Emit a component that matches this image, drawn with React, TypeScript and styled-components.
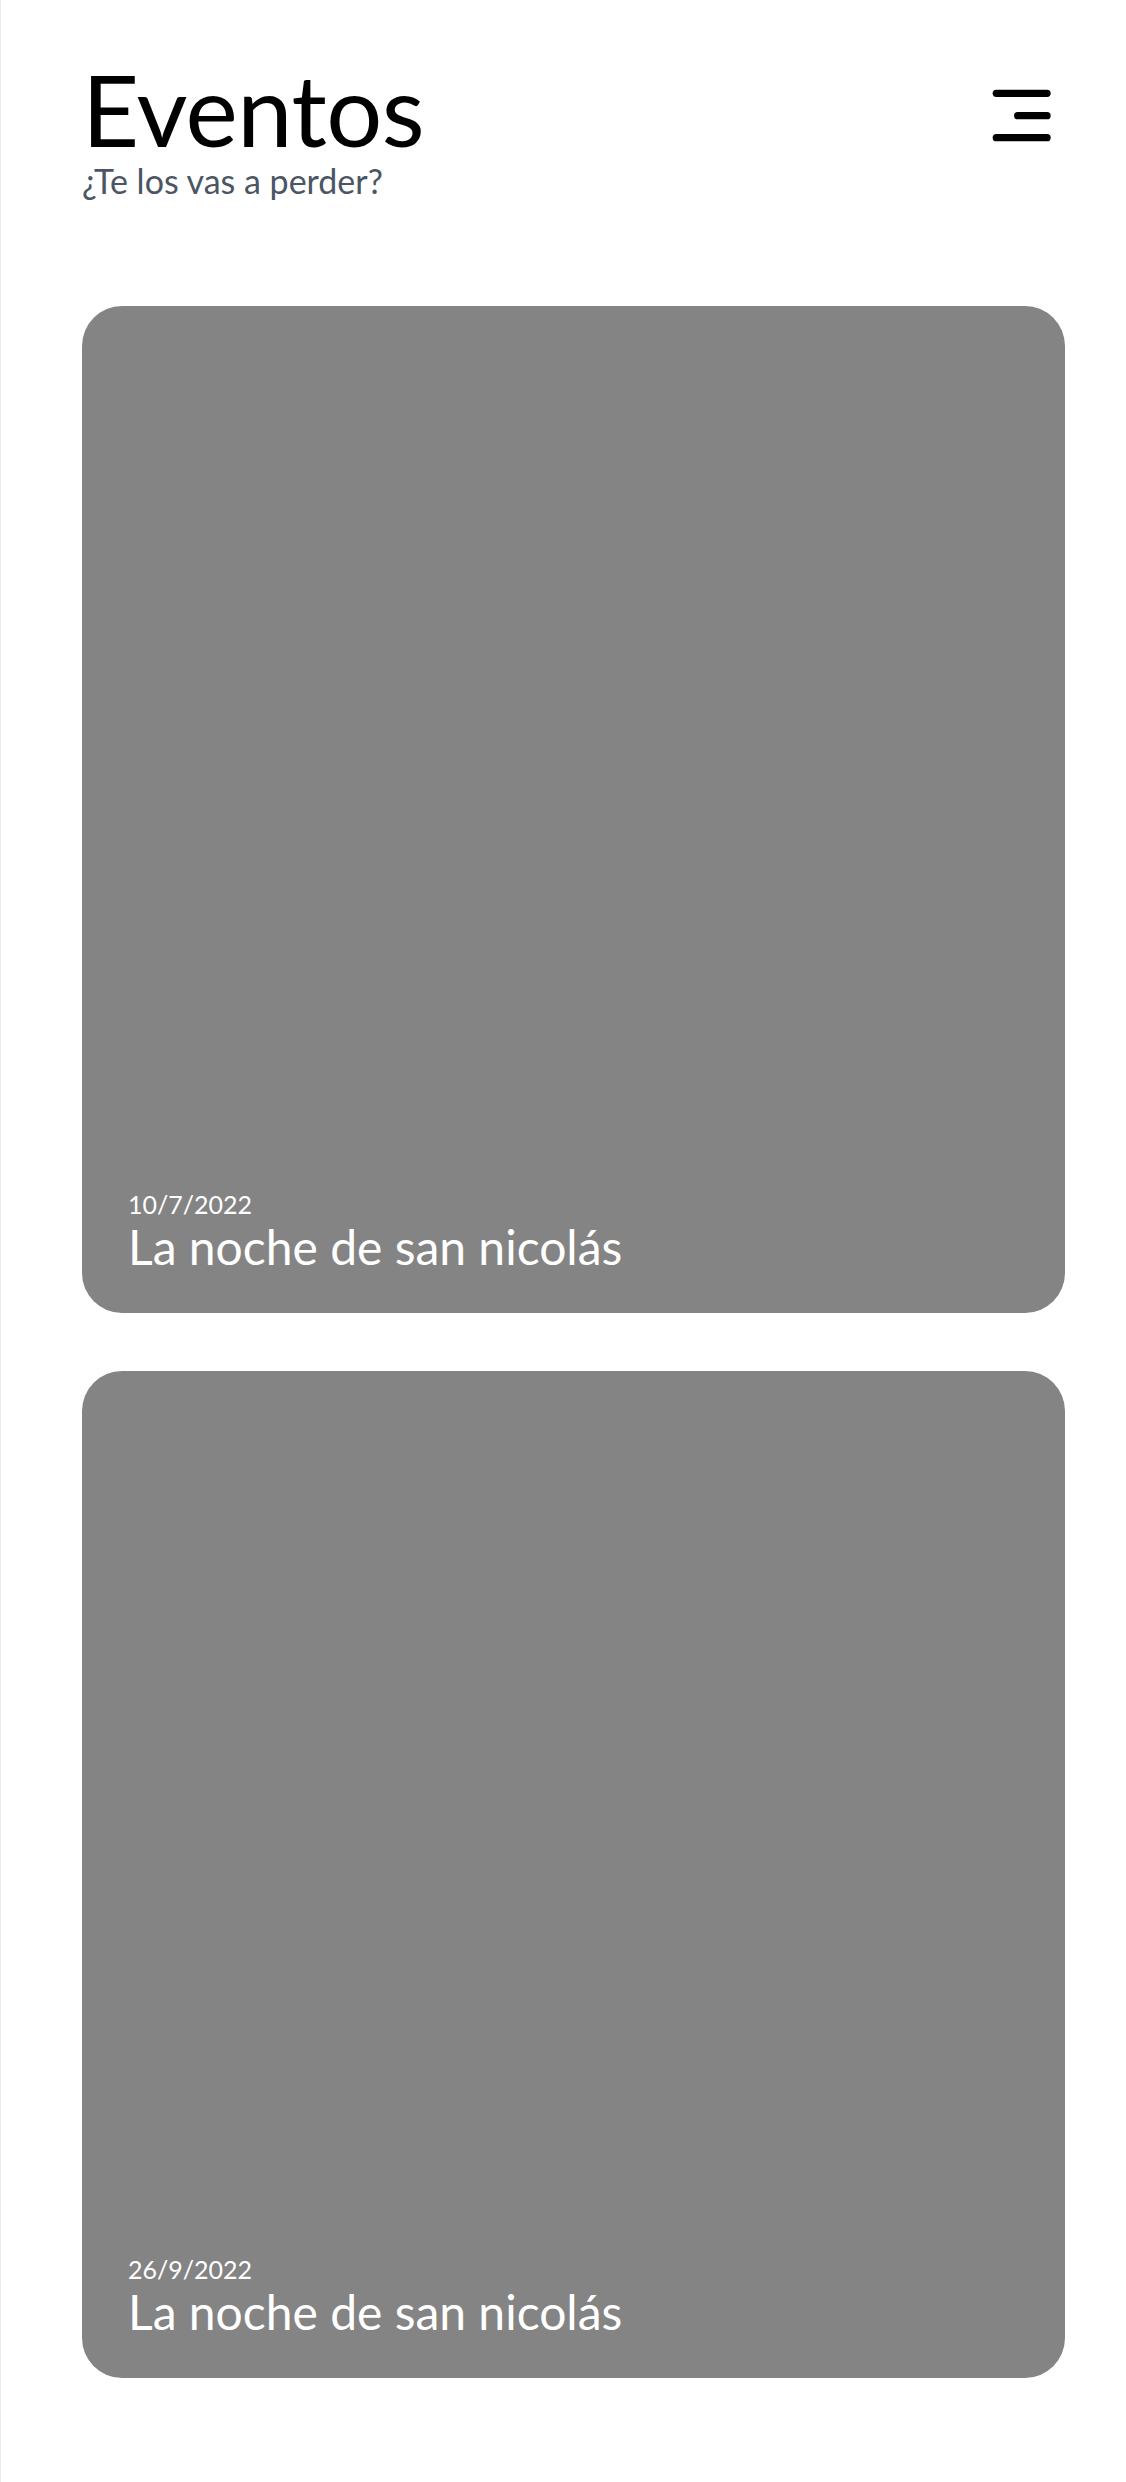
import React from "react";
import styled, { createGlobalStyle } from "styled-components";

const GlobalStyle = createGlobalStyle`
  html, body {
    margin: 0;
    padding: 0;
    background: #ffffff;
  }
  body {
    font-family: Lato, "Noto Sans", "Liberation Sans", sans-serif;
    -webkit-font-smoothing: antialiased;
  }
  * { box-sizing: border-box; }
`;

const Page = styled.main`
  min-height: 2482px;
  border-left: 1px solid #ececec;
  padding: 60px 61px 100px 81px;
`;

const Header = styled.header`
  display: flex;
  justify-content: space-between;
  align-items: flex-start;
`;

const TitleBlock = styled.div`
  display: flex;
  flex-direction: column;
`;

const Title = styled.h1`
  margin: 0;
  font-size: 99px;
  line-height: 96px;
  padding-top: 1px;
  font-weight: 400;
  color: #000000;
  letter-spacing: -0.5px;
`;

const Subtitle = styled.p`
  margin: 4px 0 0;
  font-size: 34px;
  line-height: 40px;
  font-weight: 400;
  color: #4b5563;
`;

const MenuButton = styled.button`
  margin: 24px 13px 0 0;
  padding: 0;
  border: none;
  background: transparent;
  width: 64px;
  height: 64px;
  display: flex;
  cursor: pointer;
`;

const EventList = styled.section`
  margin-top: 105px;
  display: flex;
  flex-direction: column;
  gap: 58px;
`;

const Card = styled.article`
  height: 1007px;
  border-radius: 40px;
  background: #848484;
  color: #ffffff;
  display: flex;
  flex-direction: column;
  justify-content: flex-end;
  padding: 0 46px 38px;
`;

const CardDate = styled.span`
  font-size: 25px;
  line-height: 30px;
  margin-bottom: 0;
  font-weight: 400;
`;

const CardTitle = styled.h2`
  margin: 0;
  font-size: 48px;
  line-height: 56px;
  font-weight: 400;
`;

const MenuIcon = () => (
  <svg width="64" height="64" viewBox="0 0 64 64" fill="none">
    <g stroke="#000" strokeWidth="7.3" strokeLinecap="round">
      <line x1="8.3" y1="9.3" x2="59" y2="9.3" />
      <line x1="29.7" y1="31.7" x2="59" y2="31.7" />
      <line x1="8.3" y1="53.7" x2="59" y2="53.7" />
    </g>
  </svg>
);

const events = [
  { date: "10/7/2022", title: "La noche de san nicolás" },
  { date: "26/9/2022", title: "La noche de san nicolás" },
];

export default function App() {
  return (
    <>
      <GlobalStyle />
      <Page>
        <Header>
          <TitleBlock>
            <Title>Eventos</Title>
            <Subtitle>¿Te los vas a perder?</Subtitle>
          </TitleBlock>
          <MenuButton aria-label="Menú">
            <MenuIcon />
          </MenuButton>
        </Header>
        <EventList>
          {events.map((e, i) => (
            <Card key={i}>
              <CardDate>{e.date}</CardDate>
              <CardTitle>{e.title}</CardTitle>
            </Card>
          ))}
        </EventList>
      </Page>
    </>
  );
}
